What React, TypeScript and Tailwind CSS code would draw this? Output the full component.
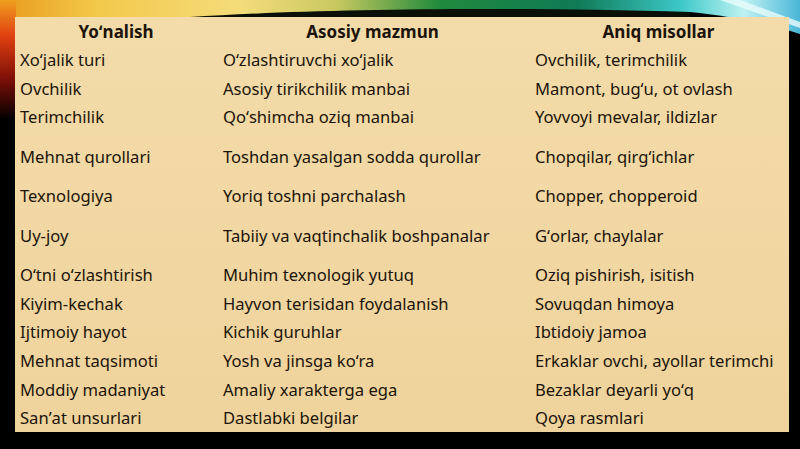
import React from 'react';

const rows: { a: string; b: string; c: string; h: string }[] = [
  { a: 'Xoʻjalik turi', b: 'Oʻzlashtiruvchi xoʻjalik', c: 'Ovchilik, terimchilik', h: 'h-[28.6px]' },
  { a: 'Ovchilik', b: 'Asosiy tirikchilik manbai', c: 'Mamont, bugʻu, ot ovlash', h: 'h-[28.6px]' },
  { a: 'Terimchilik', b: 'Qoʻshimcha oziq manbai', c: 'Yovvoyi mevalar, ildizlar', h: 'h-[40px]' },
  { a: 'Mehnat qurollari', b: 'Toshdan yasalgan sodda qurollar', c: 'Chopqilar, qirgʻichlar', h: 'h-[39px]' },
  { a: 'Texnologiya', b: 'Yoriq toshni parchalash', c: 'Chopper, chopperoid', h: 'h-[40px]' },
  { a: 'Uy-joy', b: 'Tabiiy va vaqtinchalik boshpanalar', c: 'Gʻorlar, chaylalar', h: 'h-[39px]' },
  { a: 'Oʻtni oʻzlashtirish', b: 'Muhim texnologik yutuq', c: 'Oziq pishirish, isitish', h: 'h-[28.6px]' },
  { a: 'Kiyim-kechak', b: 'Hayvon terisidan foydalanish', c: 'Sovuqdan himoya', h: 'h-[28.6px]' },
  { a: 'Ijtimoiy hayot', b: 'Kichik guruhlar', c: 'Ibtidoiy jamoa', h: 'h-[28.6px]' },
  { a: 'Mehnat taqsimoti', b: 'Yosh va jinsga koʻra', c: 'Erkaklar ovchi, ayollar terimchi', h: 'h-[28.6px]' },
  { a: 'Moddiy madaniyat', b: 'Amaliy xarakterga ega', c: 'Bezaklar deyarli yoʻq', h: 'h-[28.6px]' },
  { a: 'Sanʼat unsurlari', b: 'Dastlabki belgilar', c: 'Qoya rasmlari', h: 'h-[28.6px]' },
];

function Backdrop() {
  return (
    <svg className="absolute inset-0" width="800" height="449" viewBox="0 0 800 449">
      <defs>
        <linearGradient id="top" x1="0" y1="0" x2="1" y2="0">
          <stop offset="0" stopColor="#e89a1c" />
          <stop offset="0.12" stopColor="#f3c94a" />
          <stop offset="0.3" stopColor="#f4dc7a" />
          <stop offset="0.42" stopColor="#c9c960" />
          <stop offset="0.55" stopColor="#1f8a3c" />
          <stop offset="0.72" stopColor="#0f7a55" />
          <stop offset="0.85" stopColor="#3cc8c8" />
          <stop offset="0.93" stopColor="#bff2f2" />
          <stop offset="1" stopColor="#4ab6d8" />
        </linearGradient>
        <linearGradient id="left" x1="0" y1="0" x2="0" y2="1">
          <stop offset="0" stopColor="#f0a020" />
          <stop offset="0.3" stopColor="#e04010" />
          <stop offset="0.65" stopColor="#801008" />
          <stop offset="1" stopColor="#000000" />
        </linearGradient>
      </defs>
      <rect width="800" height="449" fill="#000" />
      <rect x="0" y="0" width="800" height="40" fill="url(#top)" />
      <rect x="0" y="0" width="16" height="120" fill="url(#left)" />
      <path d="M190 17 C 300 10, 480 6, 690 12 L 690 17 Z" fill="#0a0f08" />
      <path d="M690 12 C 730 16, 770 24, 800 34 L 800 40 L 690 40 Z" fill="#000" />
      <path d="M740 0 L 800 22 L 800 28 L 720 0 Z" fill="#e8fbfb" opacity="0.8" />
    </svg>
  );
}

export default function App() {
  return (
    <div className="relative w-[800px] h-[449px] overflow-hidden bg-black" style={{ fontFamily: '"Noto Sans", "Open Sans", sans-serif' }}>
      <Backdrop />
      <div className="relative ml-[15px] mt-[17px] w-[774px] h-[415px] bg-gradient-to-b from-[#f3dcaa] to-[#efd39c] text-[16.6px] leading-6 text-[#1c140a]">
        <div className="grid grid-cols-[202px_311px_261px] h-[29px] pt-[3px] text-[17px] font-bold">
          <div className="text-center">Yoʻnalish</div>
          <div className="text-center">Asosiy mazmun</div>
          <div className="text-center">Aniq misollar</div>
        </div>
        {rows.map((r) => (
          <div key={r.a} className={`grid grid-cols-[202px_311px_261px] pt-[2px] ${r.h}`}>
            <div className="pl-[5px]">{r.a}</div>
            <div className="pl-[6px]">{r.b}</div>
            <div className="pl-[7px]">{r.c}</div>
          </div>
        ))}
      </div>
    </div>
  );
}
